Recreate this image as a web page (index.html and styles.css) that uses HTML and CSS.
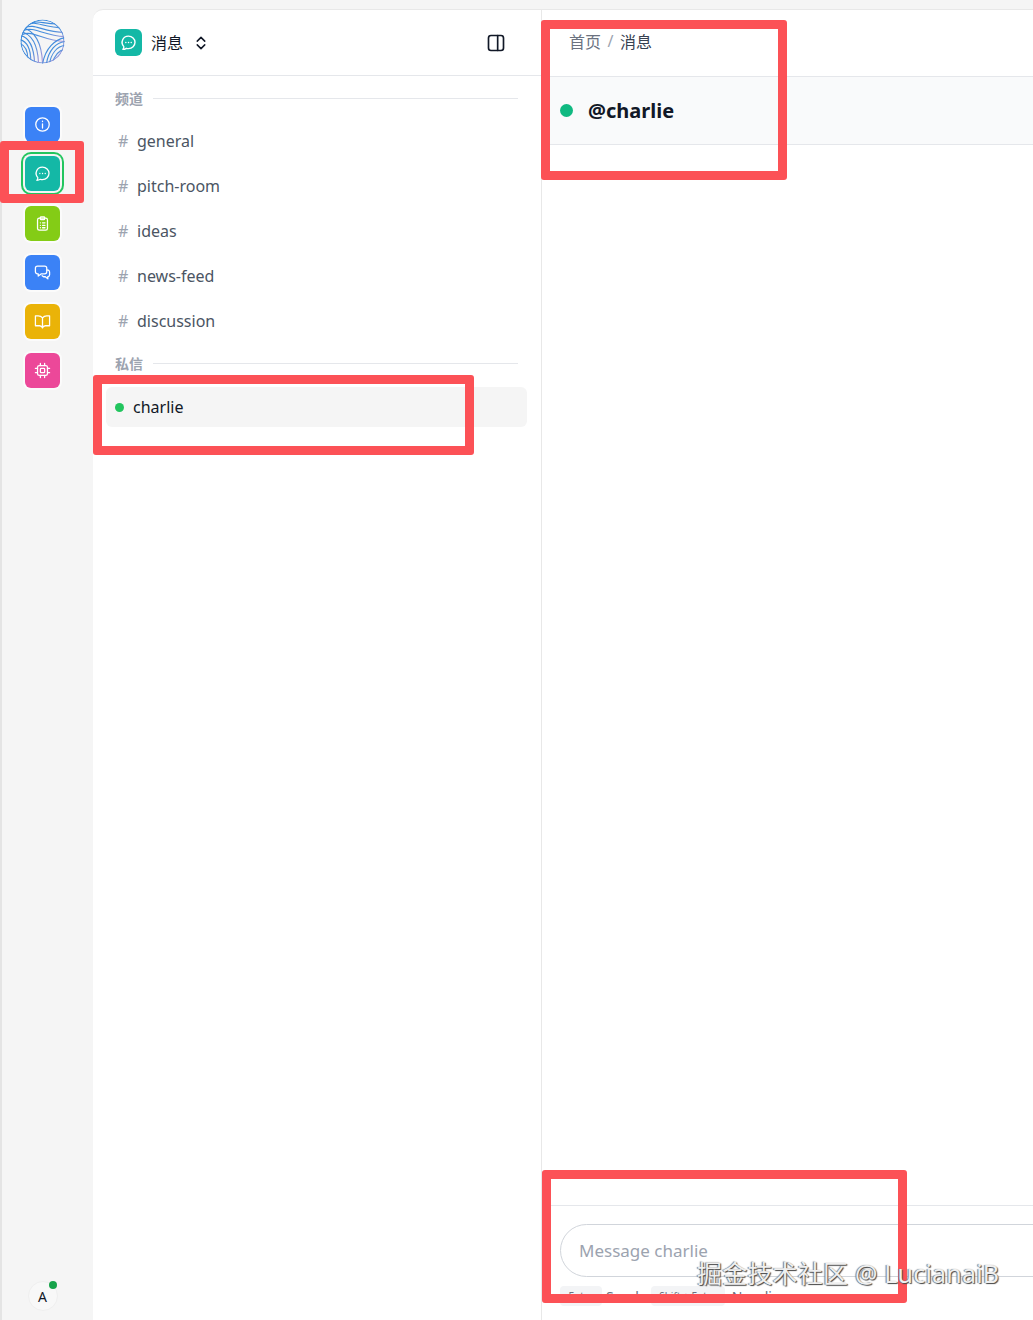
FILE: index.html
```html
<!DOCTYPE html>
<html lang="zh">
<head>
<meta charset="utf-8">
<title>消息</title>
<link rel="stylesheet" href="styles.css">
</head>
<body>
<div class="app">
  <nav class="rail">
    <svg class="logo" viewBox="0 0 46 46" fill="none" stroke-width="1.2">
      <defs>
        <clipPath id="c"><circle cx="23" cy="23" r="22.500"/></clipPath>
        <linearGradient id="g" x1="0" y1="0" x2="1" y2="1"><stop offset="0" stop-color="#2f86dc"/><stop offset=".6" stop-color="#4f90dc"/><stop offset="1" stop-color="#c09ad8"/></linearGradient>
      </defs>
      <g clip-path="url(#c)" stroke="url(#g)">
        <circle cx="23" cy="23" r="22"/>
        <path d="M8 6c8-5 15 3 37 3M5 9c10-5 17 4 41 5M3 12c12-5 20 5 43 6M2 16c12-5 20 6 44 7M12 4c6-3 12 1 26 1"/>
        <path d="M1 17c8 2 13 10 14 28M0 21c7 2 11 10 11 22M0 25c5 2 8 8 8 16M1 13c10 2 17 12 18 32M3 9c11 3 19 13 20 36"/>
        <path d="M46 19c-10 2-20 10-23 27M46 23c-9 1-17 9-19 23M46 27c-8 1-14 8-16 19M46 31c-6 1-11 6-13 15M46 35c-5 1-8 4-10 10"/>
      </g>
    </svg>
    <div class="tiles">
      <a class="tile blue"><svg viewBox="0 0 24 24"><circle cx="12" cy="12" r="9.500"/><path d="M12 11v6M12 7.200v.6"/></svg></a>
      <a class="tile teal active"><svg viewBox="0 0 24 24"><path d="M12 3a9.200 8.800 0 0 1 0 17.600c-1 0-2-.1-3-.4-1.400.9-3 1.500-5 1.500 1-1.200 1.500-2.300 1.400-3.900A8.800 8.800 0 0 1 12 3z"/><path d="M8.200 12h.1M12 12h.1M15.800 12h.1"/></svg></a>
      <a class="tile lime"><svg viewBox="0 0 24 24"><rect x="5" y="4.500" width="14" height="17" rx="2.500"/><rect x="9" y="2.500" width="6" height="4" rx="1"/><path d="M9 11h.1M12 11h3.500M9 14.500h.1M12 14.500h3.500M9 18h.1M12 18h3.500"/></svg></a>
      <a class="tile blue"><svg viewBox="0 0 24 24"><path d="M5 3h10a3 3 0 0 1 3 3v5a3 3 0 0 1-3 3h-5l-4 3v-3H5a3 3 0 0 1-3-3V6a3 3 0 0 1 3-3z"/><path d="M18.500 8.500A3 3 0 0 1 22 11.500v3.500a3 3 0 0 1-2.500 3v3l-3.500-3h-2.500l-2-1.500"/></svg></a>
      <a class="tile amber"><svg viewBox="0 0 24 24"><path d="M12 7v14M12 7c-1.500-2-3.500-3-6-3H2v14h6c2 0 3.200 1 4 3 .8-2 2-3 4-3h6V4h-4c-2.500 0-4.500 1-6 3z"/></svg></a>
      <a class="tile pink"><svg viewBox="0 0 24 24"><rect x="5" y="5" width="14" height="14" rx="2.500"/><rect x="9" y="9" width="6" height="6" rx="1"/><path d="M9 2v3M15 2v3M9 19v3M15 19v3M2 9h3M2 15h3M19 9h3M19 15h3"/></svg></a>
    </div>
    <div class="avatar">A<span class="avatar-dot"></span></div>
  </nav>

  <aside class="sidebar">
    <header class="side-head">
      <span class="app-icon"><svg viewBox="0 0 24 24"><path d="M12 3a9.200 8.800 0 0 1 0 17.600c-1 0-2-.1-3-.4-1.400.9-3 1.500-5 1.500 1-1.200 1.500-2.300 1.400-3.900A8.800 8.800 0 0 1 12 3z"/><path d="M8.200 12h.1M12 12h.1M15.800 12h.1"/></svg></span>
      <span class="app-name">消息</span>
      <svg class="chevrons" viewBox="0 0 24 24"><path d="M7 9.500l5-5 5 5M7 14.500l5 5 5-5"/></svg>
      <svg class="panel-toggle" viewBox="0 0 24 24"><rect x="3" y="3" width="18" height="18" rx="3"/><path d="M14 3v18"/></svg>
    </header>
    <div class="side-body">
      <div class="group-label"><span>频道</span><i></i></div>
      <ul class="channels">
        <li><b>#</b>general</li>
        <li><b>#</b>pitch-room</li>
        <li><b>#</b>ideas</li>
        <li><b>#</b>news-feed</li>
        <li><b>#</b>discussion</li>
      </ul>
      <div class="group-label dm-label"><span>私信</span><i></i></div>
      <div class="dm"><span class="dm-dot"></span>charlie</div>
    </div>
  </aside>

  <main class="main">
    <div class="crumbs"><span>首页</span><em>/</em><strong>消息</strong></div>
    <div class="chat-head"><span class="chat-dot"></span><h1>@charlie</h1></div>
    <div class="messages"></div>
    <footer class="composer">
      <div class="input">Message charlie</div>
      <div class="hints"><kbd>Enter</kbd><span>Send</span><kbd class="wide">Shift + Enter</kbd><span>New line</span></div>
    </footer>
  </main>
</div>

<div class="mark mark-1"></div>
<div class="mark mark-2"></div>
<div class="mark mark-3"></div>
<div class="mark mark-4"></div>
<div class="watermark">掘金技术社区 @ LucianaiB</div>
</body>
</html>
```

FILE: styles.css
```css
* { box-sizing: border-box; }
html, body { margin: 0; height: 1320px; overflow: hidden; }
body {
  position: relative;
  background: #f5f5f5;
  color: #111827;
  font-family: "Noto Sans", "Noto Sans CJK SC", sans-serif;
}
.app {
  display: grid;
  grid-template-columns: 93px 448px 1fr;
  height: 1320px;
  padding-top: 9px;
}
.rail {
  display: flex;
  flex-direction: column;
  align-items: center;
  padding: 19px 10px 9px 0;
  border-left: 2px solid #e4e4e4;
  margin-top: -9px;
  background: #f5f5f5;
}
.logo { width: 45px; height: 45px; flex: none; }
.tiles {
  display: flex;
  flex-direction: column;
  gap: 14.300px;
  margin-top: 43px;
}
.tile {
  display: flex;
  align-items: center;
  justify-content: center;
  width: 35px;
  height: 35px;
  border-radius: 6px;
  box-shadow: 0 0 0 2px #fbfbfb;
}
.tile svg {
  width: 17px;
  height: 17px;
  fill: none;
  stroke: #fff;
  stroke-width: 1.800;
  stroke-linecap: round;
  stroke-linejoin: round;
}
.blue { background: #3b82f6; }
.teal { background: #14b8a6; }
.lime { background: #84cc16; }
.amber { background: #eab308; }
.pink { background: #ec4899; }
.active {
  box-shadow: 0 0 0 2px #f5f5f5, 0 0 0 4px #22c55e;
}
.avatar {
  position: relative;
  display: flex;
  align-items: center;
  justify-content: center;
  width: 30px;
  height: 30px;
  margin-top: auto;
  border-radius: 50%;
  background: #f8f8f8;
  border: 1px solid #efefef;
  font-size: 14px;
}
.avatar-dot {
  position: absolute;
  top: -1px;
  right: 0;
  width: 8px;
  height: 8px;
  border-radius: 50%;
  background: #16a34a;
}
.sidebar {
  display: flex;
  flex-direction: column;
  background: #fff;
  border-top: 1px solid #e8e8e8;
  border-top-left-radius: 10px;
}
.side-head {
  display: flex;
  align-items: center;
  flex: none;
  height: 66px;
  padding: 0 35px 0 22px;
  border-bottom: 1px solid #e5e7eb;
}
.app-icon {
  display: flex;
  align-items: center;
  justify-content: center;
  width: 27px;
  height: 27px;
  border-radius: 6px;
  background: #14b8a6;
}
.app-icon svg {
  width: 17px;
  height: 17px;
  fill: none;
  stroke: #fff;
  stroke-width: 2;
  stroke-linecap: round;
  stroke-linejoin: round;
}
.app-name { margin-left: 9px; font-size: 16px; line-height: 20px; }
.chevrons, .panel-toggle {
  fill: none;
  stroke: #111827;
  stroke-width: 2;
  stroke-linecap: round;
  stroke-linejoin: round;
}
.chevrons { width: 18px; height: 18px; margin-left: 9px; }
.panel-toggle { width: 20px; height: 20px; margin-left: auto; }
.side-body { padding: 13px 14px 0 22px; }
.group-label {
  display: flex;
  align-items: center;
  gap: 10px;
  height: 18px;
  padding-right: 9px;
  color: #9ca3af;
  font-size: 14px;
  font-weight: 700;
}
.group-label i { flex: 1; height: 1px; background: #e5e7eb; }
.channels { margin: 11px 0 0; padding: 0; list-style: none; }
.channels li {
  display: flex;
  align-items: center;
  height: 45px;
  padding-left: 3px;
  color: #4b5563;
  font-size: 16px;
}
.channels b {
  width: 19px;
  color: #9ca3af;
  font-weight: 400;
}
.dm-label { margin-top: 11px; }
.dm {
  display: flex;
  align-items: center;
  height: 40px;
  margin: 15px 0 0 -9px;
  padding-left: 9px;
  border-radius: 6px;
  background: #f5f5f5;
  font-size: 16px;
}
.dm-dot {
  width: 9px;
  height: 9px;
  margin-right: 9px;
  border-radius: 50%;
  background: #22c55e;
}
.main {
  display: flex;
  flex-direction: column;
  min-width: 0;
  overflow: hidden;
  background: #fff;
  border-top: 1px solid #e8e8e8;
  border-left: 1px solid #e8e8e8;
}
.crumbs {
  display: flex;
  align-items: center;
  flex: none;
  gap: 6.500px;
  height: 67px;
  padding: 0 0 5px 27px;
  border-bottom: 1px solid #e5e7eb;
  color: #6b7280;
  font-size: 16px;
}
.crumbs em { font-style: normal; color: #9ca3af; }
.crumbs strong { color: #374151; font-weight: 400; }
.chat-head {
  display: flex;
  align-items: center;
  flex: none;
  gap: 14px;
  height: 68px;
  padding-left: 18px;
  background: #f9fafb;
  border-bottom: 1px solid #e5e7eb;
}
.chat-dot { width: 13px; height: 13px; border-radius: 50%; background: #10b981; }
.chat-head h1 { margin: 0 0 0 1px; font-size: 20px; font-weight: 700; color: #111827; }
.messages { flex: 1; }
.composer {
  flex: none;
  height: 115px;
  padding: 18px 0 0 18px;
  border-top: 1px solid #e5e7eb;
}
.input {
  display: flex;
  align-items: center;
  width: 700px;
  height: 53px;
  padding-left: 18px;
  border: 1px solid #d1d5db;
  border-radius: 27px;
  color: #9ca3af;
  font-size: 17px;
}
.hints {
  display: flex;
  align-items: center;
  gap: 4px;
  height: 20px;
  margin-top: 9px;
  color: #6b7280;
  font-size: 14px;
  white-space: nowrap;
}
.hints kbd {
  display: flex;
  align-items: center;
  justify-content: center;
  width: 42px;
  height: 20px;
  border-radius: 4px;
  background: #f3f4f6;
  font: inherit;
  font-size: 10px;
}
.hints kbd.wide { width: 74px; margin: 0 3px 0 8px; }
.mark {
  position: absolute;
  border: 9px solid #fc5156;
  border-radius: 3px;
}
.mark-1 { left: 0; top: 141px; width: 84px; height: 62px; }
.mark-2 { left: 93px; top: 375px; width: 381px; height: 80px; }
.mark-3 { left: 541px; top: 20px; width: 246px; height: 160px; }
.mark-4 { left: 542px; top: 1170px; width: 365px; height: 133px; }
.watermark {
  position: absolute;
  left: 697px;
  top: 1255px;
  color: #efefef;
  font-size: 25px;
  line-height: 36px;
  letter-spacing: .2px;
  white-space: nowrap;
  text-shadow: 1px 1px 1px #444, -1px 0 1px #777;
}
```
